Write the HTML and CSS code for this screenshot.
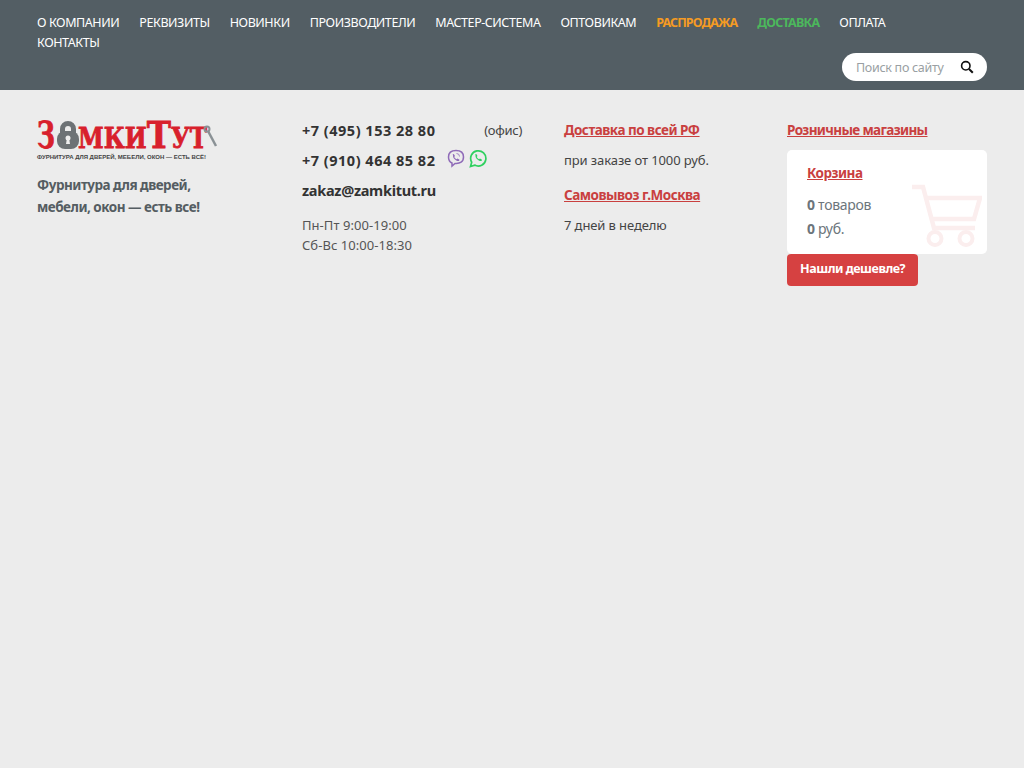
FILE: index.html
```html
<!DOCTYPE html>
<html lang="ru">

<head>
    <meta charset="UTF-8">
    <meta name="viewport" content="width=device-width, initial-scale=1.0">
    <title>ЗамкиТут</title>
    <link rel="stylesheet" href="styles.css">
</head>

<body>
    <header class="topbar">
        <nav class="menu">
            <a href="#">О компании</a>
            <a href="#">Реквизиты</a>
            <a href="#">Новинки</a>
            <a href="#">Производители</a>
            <a href="#">Мастер-система</a>
            <a href="#">Оптовикам</a>
            <a href="#" class="sale">Распродажа</a>
            <a href="#" class="delivery">Доставка</a>
            <a href="#">Оплата</a>
            <a href="#">Контакты</a>
        </nav>
        <form class="search">
            <span class="search-text">Поиск по сайту</span>
            <svg class="search-icon" width="14" height="14" viewBox="0 0 14 14">
                <circle cx="5.8" cy="5.8" r="4.2" fill="none" stroke="#111" stroke-width="1.6" />
                <path d="M9 9l3.8 3.8" stroke="#111" stroke-width="2" fill="none" />
            </svg>
        </form>
    </header>

    <main class="info">
        <div class="brand">
            <a href="#" class="logo">
                <svg class="logo-top" width="180" height="32" viewBox="0 0 180 32">
                    <text class="logo-word" x="0" y="28" textLength="18" lengthAdjust="spacingAndGlyphs">З</text>
                    <path d="M23 13V9a8 8 0 0 1 16 0v4h-5V9a3 3 0 0 0-6 0v4z" fill="#6d7275" />
                    <rect x="20" y="11" width="22" height="18" rx="8" fill="#6d7275" />
                    <circle cx="31" cy="18" r="2.500" fill="#eee" />
                    <path d="M30 18h2l1 6h-4z" fill="#eee" />
                    <text class="logo-word" x="41" y="28" textLength="129" lengthAdjust="spacingAndGlyphs">мкиТут</text>
                    <path d="M171 11l8 15" stroke="#8a9195" stroke-width="2.500" fill="none" />
                    <circle cx="170" cy="9" r="2.500" fill="none" stroke="#8a9195" stroke-width="2" />
                </svg>
                <div class="logo-sub">ФУРНИТУРА ДЛЯ ДВЕРЕЙ, МЕБЕЛИ, ОКОН — ЕСТЬ ВСЁ!</div>
            </a>
            <p class="slogan">Фурнитура для дверей,<br>мебели, окон — есть все!</p>
        </div>

        <div class="contacts">
            <div class="phone-row">
                <a href="#" class="phone">+7 (495) 153 28 80</a>
                <span class="office">(офис)</span>
            </div>
            <div class="phone-row">
                <a href="#" class="phone">+7 (910) 464 85 82</a>
                <span class="messengers">
                    <svg width="18" height="19" viewBox="0 0 18 19">
                        <path d="M9 1.500c-4.500 0-7.500 1.500-7.500 6.500 0 3 1 5 3.500 6v3l3-2.600c5 .4 8.500-1.400 8.500-6.400 0-5-3-6.500-7.500-6.500z" fill="none" stroke="#8f6bb8" stroke-width="1.500" />
                        <path d="M5.500 5.500l1.300-.5 1.200 2-.8 1c.5 1 1.300 1.800 2.300 2.300l1-.8 2 1.200-.5 1.300c-3 .5-6.500-3-6-6z" fill="#8f6bb8" />
                        <path d="M9.500 4.500a3 3 0 0 1 3 3" fill="none" stroke="#8f6bb8" stroke-width=".8" />
                    </svg>
                    <svg width="18" height="19" viewBox="0 0 18 19">
                        <path d="M1.500 17.500l1.200-4.300a7.600 7.600 0 1 1 3 2.900z" fill="none" stroke="#2fd05f" stroke-width="1.700" />
                        <path d="M6 5.500l1.300-.5 1.200 2-.8 1c.5 1 1.300 1.800 2.300 2.300l1-.8 2 1.200-.5 1.300c-3 .5-6.500-3-6-6z" fill="#2fd05f" />
                    </svg>
                </span>
            </div>
            <a href="#" class="email">zakaz@zamkitut.ru</a>
            <p class="hours">Пн-Пт 9:00-19:00<br>Сб-Вс 10:00-18:30</p>
        </div>

        <div class="shipping">
            <a href="#" class="red-link">Доставка по всей РФ</a>
            <p>при заказе от 1000 руб.</p>
            <a href="#" class="red-link">Самовывоз г.Москва</a>
            <p>7 дней в неделю</p>
        </div>

        <div class="side">
            <a href="#" class="red-link stores">Розничные магазины</a>
            <div class="cart">
                <a href="#" class="red-link">Корзина</a>
                <div class="cart-line"><b>0</b> товаров</div>
                <div class="cart-line"><b>0</b> руб.</div>
                <svg class="cart-icon" width="70" height="64" viewBox="0 0 70 64">
                    <path d="M0 3h11l11 41h41" fill="none" stroke="#fbeeee" stroke-width="4.500" />
                    <path d="M14 14h54l-6 21H21" fill="none" stroke="#fbeeee" stroke-width="4.500" />
                    <circle cx="23" cy="54.500" r="6.500" fill="none" stroke="#fbeeee" stroke-width="4" />
                    <circle cx="54" cy="54.500" r="6.500" fill="none" stroke="#fbeeee" stroke-width="4" />
                </svg>
            </div>
            <a href="#" class="cheaper">Нашли дешевле?</a>
        </div>
    </main>
</body>

</html>
```

FILE: styles.css
```css
body {
    margin: 0;
    min-height: 768px;
    background-color: #ececec;
    font-family: 'Noto Sans', sans-serif;
    font-size: 13px;
    color: #333;
}

a {
    text-decoration: none;
}

.topbar {
    height: 90px;
    box-sizing: border-box;
    padding: 13px 37px 0;
    background-color: #535e64;
}

.menu {
    display: flex;
    flex-wrap: wrap;
    column-gap: 20px;
    max-width: 900px;
    line-height: 20px;
}

.menu a {
    color: #fff;
    text-transform: uppercase;
    font-size: 12.500px;
    letter-spacing: -0.42px;
}

.menu .sale {
    color: #f59b23;
    font-weight: 700;
    letter-spacing: -0.9px;
}

.menu .delivery {
    color: #4cb85c;
    font-weight: 700;
    letter-spacing: -0.75px;
}

.search {
    display: flex;
    align-items: center;
    justify-content: space-between;
    box-sizing: border-box;
    width: 145px;
    height: 28px;
    margin: 0 0 0 auto;
    padding: 0 13px 0 14px;
    background-color: #fff;
    border-radius: 14px;
}

.search-text {
    color: #9a9fa3;
    font-size: 12.500px;
    letter-spacing: -0.3px;
}

.info {
    display: grid;
    grid-template-columns: 265px 262px 223px 200px;
    padding: 30px 37px 0;
}

.logo {
    display: block;
    width: 180px;
    height: 42px;
}

.logo-top {
    display: block;
    overflow: visible;
}

.logo-word {
    font-family: 'DejaVu Serif', serif;
    font-weight: 700;
    font-size: 38px;
    font-variant: small-caps;
    fill: #d8202c;
    stroke: #d8202c;
    stroke-width: 0.8px;
}

.logo-sub {
    margin-top: 1px;
    font-family: 'Liberation Sans', sans-serif;
    font-weight: 700;
    font-size: 6px;
    line-height: 8px;
    color: #444;
    white-space: nowrap;
}

.slogan {
    margin: 12px 0 0;
    font-size: 13.500px;
    font-weight: 700;
    line-height: 22px;
    color: #555d62;
    letter-spacing: -0.5px;
}

.contacts {
    width: 220px;
}

.phone-row {
    display: flex;
    align-items: center;
    justify-content: space-between;
    height: 30px;
}

.phone-row:first-child {
    margin-top: -5px;
}

.phone,
.email {
    color: #333;
    font-size: 14.500px;
    font-weight: 700;
}

.phone {
    letter-spacing: 0.5px;
}

.office {
    color: #444;
    letter-spacing: -0.3px;
}

.messengers {
    display: flex;
    gap: 4px;
    margin: -4px 35px 0 0;
}

.email {
    display: block;
    margin-top: 5px;
    line-height: 20px;
    letter-spacing: -0.3px;
}

.hours {
    margin: 15px 0 0;
    line-height: 20px;
    color: #555;
    letter-spacing: 0.05px;
}

.red-link {
    color: #c9403f;
    font-size: 13.500px;
    font-weight: 700;
    line-height: 20px;
    text-decoration: underline;
    letter-spacing: -0.5px;
}

.red-link.stores {
    letter-spacing: -0.65px;
}

.shipping p {
    margin: 10px 0 15px;
    line-height: 20px;
    color: #444;
    letter-spacing: -0.1px;
}

.cart {
    position: relative;
    box-sizing: border-box;
    height: 104px;
    margin-top: 10px;
    padding: 13px 20px 0;
    background-color: #fff;
    border-radius: 5px;
    overflow: hidden;
}

.cart-line {
    position: relative;
    color: #6c757b;
    font-size: 14px;
    line-height: 24px;
    letter-spacing: -0.3px;
}

.cart .red-link {
    display: block;
    width: max-content;
    margin-bottom: 10px;
}

.cart-icon {
    position: absolute;
    top: 34px;
    right: 5px;
}

.cheaper {
    display: inline-block;
    height: 32px;
    padding: 0 13px;
    background-color: #d64141;
    border-radius: 4px;
    color: #fff;
    font-size: 12.500px;
    font-weight: 700;
    line-height: 30px;
    letter-spacing: -0.45px;
}
```
